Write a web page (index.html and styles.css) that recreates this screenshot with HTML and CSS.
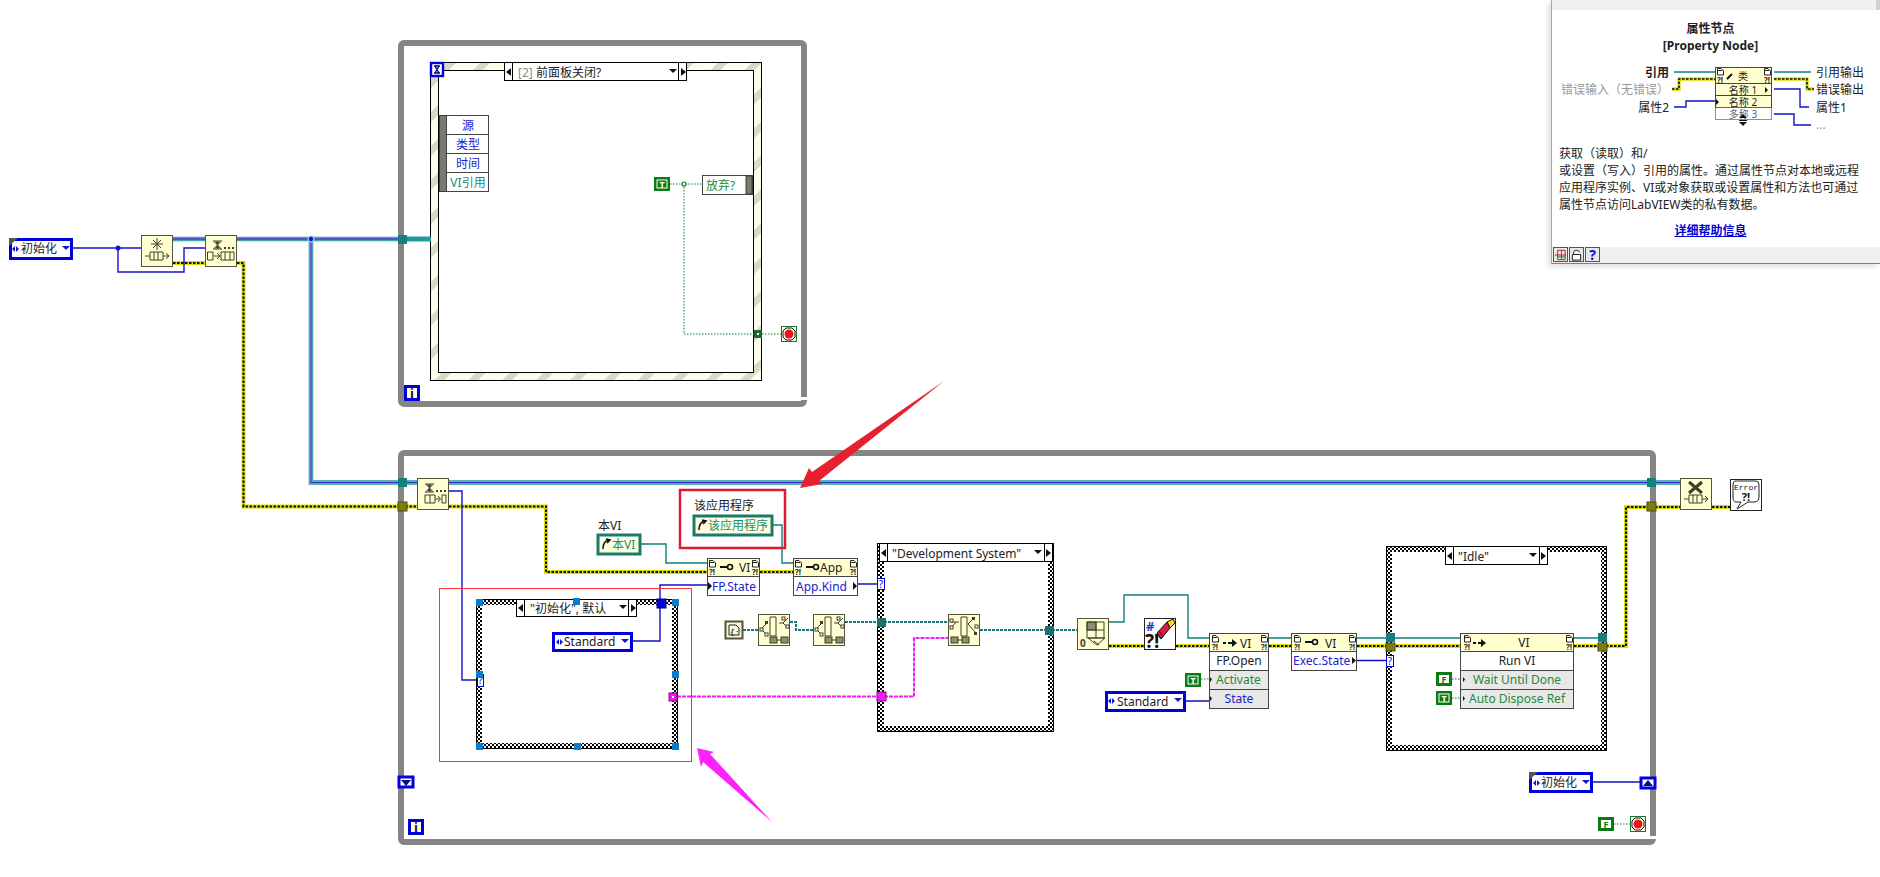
FILE: index.html
```html
<!DOCTYPE html>
<html lang="zh">
<head>
<meta charset="utf-8">
<title>LabVIEW block diagram</title>
<link rel="stylesheet" href="styles.css">
</head>
<body>
<main class="desk">
<svg class="canvas" width="1880" height="877" viewBox="0 0 1880 877" xmlns="http://www.w3.org/2000/svg">
<defs>
  <pattern id="checker" width="4" height="4" patternUnits="userSpaceOnUse">
    <rect width="4" height="4" fill="#fff"/>
    <rect width="2" height="2" fill="#000"/>
    <rect x="2" y="2" width="2" height="2" fill="#000"/>
  </pattern>
  <pattern id="stripes" width="24" height="24" patternUnits="userSpaceOnUse" patternTransform="rotate(-45)">
    <rect width="24" height="24" fill="#fdfdec"/>
    <rect width="24" height="7" fill="#d9d9c4"/>
  </pattern>

  <g id="clusterPaths">
    <path d="M173 239H205M237 239H430M311 239V482.5H417M449 482.5H1680"/>
  </g>
  <g id="errorPaths">
    <path d="M173 263H205M237 263H243.5V506.5H417M449 506.5H546V572H707M760 572H793M1109 646H1144M1176 646H1209M1269 646H1291M1357 646H1460M1574 646H1626V507H1680M1712 507H1730"/>
  </g>

  <g id="hourglass">
    <path class="ic" d="M6 6H15M6 14H15M7 6.5L14 13.500M14 6.5L7 13.500"/>
    <path class="ic-fill" d="M8 6.500H13L10.500 10ZM10.500 10L8 13.500H13Z"/>
    <rect class="ic-fill" x="17" y="12" width="2" height="2"/>
    <rect class="ic-fill" x="21" y="12" width="2" height="2"/>
    <rect class="ic-fill" x="25" y="12" width="2" height="2"/>
  </g>
  <g id="nObtain">
    <rect class="nf" x="0.5" y="0.5" width="31" height="31"/>
    <path class="ic" d="M16 3V15M10 9H22M12 5L20 13M20 5L12 13M4 21H9M9 17H22V25H9ZM13 17V25M17 17V25M22 21H28M25 18L28 21L25 24"/>
  </g>
  <g id="nDequeueA">
    <rect class="nf" x="0.5" y="0.5" width="31" height="31"/>
    <use href="#hourglass" x="2"/>
    <path class="ic" d="M2.5 17H8V25H2.5ZM9 21H15M12 18L15 21L12 24M16 17H29V25H16ZM20 17V25M25 17V25"/>
  </g>
  <g id="nDequeueB">
    <rect class="nf" x="0.5" y="0.5" width="31" height="31"/>
    <use href="#hourglass" x="2"/>
    <path class="ic" d="M8 17H18V25H8ZM13 17V25M18 21H23M21 18L23.500 21L21 24M25 17H29V25H25Z"/>
  </g>
  <g id="nRelease">
    <rect class="nf" x="0.5" y="0.5" width="31" height="31"/>
    <path class="ic-bold" d="M9 4L22 15M22 4L9 15"/>
    <path class="ic" d="M4 21H9M9 17H22V25H9ZM13 17V25M17 17V25M22 21H28M25 18L28 21L25 24"/>
  </g>
  <g id="nSplitA">
    <rect class="nf" x="0.5" y="0.5" width="31" height="31"/>
    <path class="ic" d="M12 3H18V22H12ZM3 15L9 9M3 15L9 21M21 9H25M25 9L30 14M25 9L30 4"/>
    <rect class="ic-fill" x="7" y="7" width="3" height="3"/>
    <rect class="ic-hollow" x="2" y="14" width="3" height="3"/>
    <rect class="ic-hollow" x="7" y="19" width="3" height="3"/>
    <rect class="ic-hollow" x="24" y="3" width="3" height="3"/>
    <rect class="ic-hollow" x="28" y="11" width="3" height="3"/>
    <rect class="ic-chk" x="12" y="23" width="7" height="6"/>
    <path class="ic" d="M19 26H23"/>
    <rect class="ic-chk" x="23" y="23" width="7" height="6"/>
  </g>
  <g id="nSplitB">
    <rect class="nf" x="0.5" y="0.5" width="31" height="31"/>
    <path class="ic" d="M13 3H19V22H13ZM3 8H11M3 14L8 8M20 10L25 5M20 10L28 19"/>
    <rect class="ic-hollow" x="2" y="5" width="3" height="3"/>
    <rect class="ic-hollow" x="2" y="12" width="3" height="3"/>
    <rect class="ic-fill" x="24" y="3" width="3" height="3"/>
    <rect class="ic-hollow" x="27" y="11" width="3" height="3"/>
    <rect class="ic-fill" x="26" y="18" width="3" height="3"/>
    <rect class="ic-chk" x="3" y="23" width="7" height="6"/>
    <path class="ic" d="M10 26H14"/>
    <rect class="ic-chk" x="14" y="23" width="7" height="6"/>
  </g>
  <g id="nArray">
    <rect class="nf" x="0.5" y="0.5" width="31" height="31"/>
    <rect class="ic-chk" x="10" y="4" width="9" height="8"/>
    <path class="ic" d="M10 4H27V20H10ZM19 4V20M10 12H27M11 20L28 20L20 27ZM17 23L22 27"/>
    <text class="ic-num" x="3" y="29">0</text>
  </g>
  <g id="nClear">
    <rect class="box-w" x="0.5" y="0.5" width="31" height="31"/>
    <text class="clr-hash" x="2" y="13">#</text>
    <text class="clr-q" x="1" y="30">?!</text>
    <path class="clr-yel" d="M23 4L29 1L31 5L26 10Z"/>
    <path class="clr-red" d="M13 15L23 4L26 10L17 21Z"/>
    <path class="ic-thin" d="M13 15L17 21L19 19L15 13Z"/>
  </g>
  <g id="nError">
    <rect class="box-w" x="0.5" y="0.5" width="31" height="31"/>
    <path class="ic-thin" d="M5 2H26Q29 2 29 6V18Q29 23 24 23H18L7 30L11 23H6Q3 23 3 18V6Q3 2 5 2Z"/>
    <text class="err-t" x="16" y="11">Error</text>
    <text class="err-q" x="16" y="22">?!</text>
  </g>
  <g id="corner">
    <path class="doc" d="M0.5 0.5H4L6.500 3V7H0.5Z"/>
    <path class="ic-bar" d="M1 2.500H5"/>
    <text class="qmark" x="0" y="15">?!</text>
  </g>
  <g id="keyIcon">
    <path class="ic-key" d="M0 4H8"/>
    <circle class="ic-ring" cx="10" cy="4" r="2.500"/>
  </g>
  <g id="enumL">
    <path class="tri" d="M0 3L3 0V6Z"/>
    <path class="tri" d="M4 0L7 3L4 6Z"/>
  </g>
  <g id="stopBtn">
    <rect class="stop-b" x="0.5" y="0.5" width="15" height="15"/>
    <path class="stop-o" d="M5 2H11L14 5V11L11 14H5L2 11V5Z"/>
    <circle class="stop-r" cx="8" cy="8" r="4.500"/>
  </g>
  <g id="constT">
    <rect class="c-fill" width="16" height="14"/>
    <rect class="c-in" x="3" y="3" width="10" height="8"/>
    <text class="c-t" x="8" y="10.500">T</text>
  </g>
  <g id="constF">
    <rect class="c-fill" width="16" height="14"/>
    <rect class="c-wh" x="3" y="3" width="10" height="8"/>
    <text class="c-f" x="8" y="10.500">F</text>
  </g>
  <g id="iconI">
    <rect class="i-b" x="1.500" y="1.500" width="13" height="13"/>
    <text class="i-t" x="8" y="13">i</text>
  </g>
  <g id="sarrow">
    <path class="tri-k" d="M0 4L5 0V8Z"/>
  </g>
</defs>

<!-- wires under the structures -->
<g fill="none">
  <use href="#clusterPaths" class="cl1"/>
  <use href="#clusterPaths" class="cl2"/>
  <use href="#clusterPaths" class="cl3"/>
  <use href="#errorPaths" class="er1"/>
  <use href="#errorPaths" class="er2"/>
  <path class="w-blue" d="M72 248H141M118 248V272H184V248H205M449 491H462V680H477M707 585H660V603M858 584H877M1185 701H1209M1357 660.500H1386M1592 782H1640"/>
  <path class="w-ref" d="M641 544H666V563H707M773 525H782V563H793M1109 622H1124V595H1188V638H1209M1269 638H1291M1357 638H1460M1574 638H1598"/>
  <path class="w-scr" d="M743 630H758M790 622H796V630H813M845 622H948M980 630H1077"/>
  <path class="w-mag" d="M677 696.500H914V638H948"/>
</g>
<circle class="j-blue" cx="118" cy="248" r="2.500"/>
<circle class="j-cl" cx="311" cy="239" r="3.500"/>
<circle class="j-blue" cx="311" cy="239" r="2.200"/>

<!-- while loops -->
<rect class="loop" x="401" y="43" width="403" height="361" rx="3"/>
<rect class="notch" x="801" y="397" width="7" height="3"/>
<rect class="loop" x="401" y="453" width="1252" height="389" rx="3"/>
<rect class="notch" x="1650" y="836" width="7" height="3"/>
<rect class="tun-t" x="398" y="235" width="9" height="9"/>
<rect class="tun-t" x="398" y="478" width="9" height="9"/>
<rect class="tun-e" x="398" y="502" width="9" height="9"/>
<rect class="tun-t" x="1647" y="478" width="9" height="9"/>
<rect class="tun-e" x="1647" y="502" width="9" height="9"/>

<use href="#iconI" x="404" y="385"/>
<use href="#iconI" x="408" y="819"/>

<!-- event structure -->
<rect x="430.500" y="62.500" width="331" height="318" fill="url(#stripes)" class="frame-line"/>
<rect class="inner-line" x="438.500" y="70.500" width="315" height="302"/>
<path class="wire-in" d="M407 239H431" />
<rect class="blue-sq" x="431" y="63" width="12" height="13"/>
<path class="glass" d="M434 66H440M434 73H440M435 66L439 73M439 66L435 73"/>
<rect class="sel" x="504.500" y="62.500" width="182" height="18"/>
<path class="sel-div" d="M512.500 63V80M678.500 63V80"/>
<use href="#sarrow" x="506" y="68"/>
<path class="tri-k" d="M681 68L686 72L681 76Z"/>
<path class="tri-k" d="M669 69H677L673 73Z"/>
<text class="txt gray" x="518" y="77">[2]</text>
<text class="txt" x="536" y="77">前面板关闭?</text>

<rect class="ev-bar" x="439.500" y="115.500" width="7" height="76"/>
<rect class="cell" x="446.500" y="115.500" width="42" height="19"/>
<rect class="cell" x="446.500" y="134.500" width="42" height="19"/>
<rect class="cell" x="446.500" y="153.500" width="42" height="19"/>
<rect class="cell" x="446.500" y="172.500" width="42" height="19"/>
<text class="txt blue mid" x="468" y="130">源</text>
<text class="txt blue mid" x="468" y="149">类型</text>
<text class="txt blue mid" x="468" y="168">时间</text>
<text class="txt teal mid" x="468" y="187">VI引用</text>

<path class="w-dot" d="M670 184H702M684 184V334H754M762 334H782"/>
<use href="#constT" x="654" y="177"/>
<circle class="j-green" cx="684" cy="184" r="2"/>
<rect class="cell" x="702.500" y="175.500" width="50" height="19"/>
<rect class="ev-bar" x="746" y="176" width="6" height="18"/>
<text class="txt green" x="706" y="190">放弃?</text>
<rect class="tun-g" x="754" y="330" width="8" height="8"/>
<rect class="tun-g-dot" x="757" y="333" width="2" height="2"/>
<use href="#stopBtn" x="781" y="326"/>

<!-- outside nodes -->
<rect class="enum" x="10.500" y="239.500" width="61" height="19"/>
<path class="corner-dk" d="M9 238H18L9 246Z"/>
<use href="#enumL" x="12" y="246"/>
<text class="txt" x="21" y="253">初始化</text>
<path class="tri" d="M62 246H70L66 250Z"/>
<use href="#nObtain" x="141" y="235"/>
<use href="#nDequeueA" x="205" y="235"/>
<use href="#nDequeueB" x="417" y="478"/>
<use href="#nRelease" x="1680" y="478"/>
<use href="#nError" x="1730" y="479"/>

<!-- 本VI / 该应用程序 -->
<text class="txt" x="598" y="530">本VI</text>
<rect class="ref" x="598" y="535" width="42" height="19"/>
<path class="ic-arrow" d="M603 549Q603 541 609 540M606 539L610 540L607 543"/>
<text class="txt teal" x="612" y="549">本VI</text>
<rect class="redbox" x="680" y="490" width="105" height="58"/>
<text class="txt" x="694" y="510">该应用程序</text>
<rect class="ref" x="694" y="516" width="78" height="19"/>
<path class="ic-arrow" d="M699 530Q699 522 705 521M702 520L706 521L703 524"/>
<text class="txt teal" x="708" y="530">该应用程序</text>

<!-- property nodes -->
<g>
  <rect class="hdr" x="707.500" y="558.500" width="52" height="18"/>
  <rect class="cell" x="707.500" y="576.500" width="52" height="19"/>
  <use href="#corner" x="709" y="560"/>
  <use href="#corner" x="752" y="560"/>
  <use href="#keyIcon" x="720" y="563"/>
  <text class="txt" x="739" y="572">VI</text>
  <path class="tri-k" d="M708 582L712 586L708 590Z"/>
  <text class="txt blue" x="712" y="591">FP.State</text>
</g>
<g>
  <rect class="hdr" x="793.500" y="558.500" width="64" height="18"/>
  <rect class="cell" x="793.500" y="576.500" width="64" height="19"/>
  <use href="#corner" x="795" y="560"/>
  <use href="#corner" x="850" y="560"/>
  <use href="#keyIcon" x="806" y="563"/>
  <text class="txt" x="820" y="572">App</text>
  <text class="txt blue" x="796" y="591">App.Kind</text>
  <path class="tri-k" d="M853 582L857 586L853 590Z"/>
</g>

<!-- selected case structure -->
<rect x="476.500" y="599.500" width="201" height="149" fill="url(#checker)" class="frame-line"/>
<rect class="inner" x="482" y="605" width="190" height="138"/>
<rect class="sel" x="516.500" y="599.500" width="120" height="17"/>
<path class="sel-div" d="M524.500 600V617M628.500 600V617"/>
<use href="#sarrow" x="518" y="604"/>
<path class="tri-k" d="M631 604L636 608L631 612Z"/>
<path class="tri-k" d="M619 605H627L623 609Z"/>
<text class="txt" x="530" y="613">"初始化", 默认</text>
<path class="w-blue no-fill" d="M632 641H660V605"/>
<rect class="enum" x="553.500" y="633.500" width="78" height="17"/>
<use href="#enumL" x="556" y="639"/>
<text class="txt" x="564" y="646">Standard</text>
<path class="tri" d="M621 639H629L625 643Z"/>
<rect class="tun-b" x="657" y="599" width="9" height="9"/>
<rect class="sel-q" x="477.500" y="674.500" width="6" height="12"/>
<text class="q-blue" x="480.500" y="684">?</text>
<rect class="tun-m" x="669" y="693" width="8" height="8"/>
<rect class="tun-m-dot" x="672" y="696" width="2" height="2"/>
<rect class="handle" x="476" y="599" width="7" height="7"/>
<rect class="handle" x="573" y="598" width="7" height="7"/>
<rect class="handle" x="672" y="599" width="7" height="7"/>
<rect class="handle" x="476" y="671" width="7" height="7"/>
<rect class="handle" x="672" y="671" width="7" height="7"/>
<rect class="handle" x="476" y="743" width="7" height="7"/>
<rect class="handle" x="574" y="743" width="7" height="7"/>
<rect class="handle" x="672" y="743" width="7" height="7"/>
<rect class="redthin" x="439.500" y="588.500" width="252" height="173"/>

<!-- Development System case -->
<rect class="doc-const" x="725.500" y="621.500" width="17" height="17"/>
<path class="ic-thin" d="M729 625H736L739 628V635H729Z"/>
<text class="tiny" x="730" y="634">{·</text>
<use href="#nSplitA" x="758" y="614"/>
<use href="#nSplitA" x="813" y="614"/>
<rect x="877.500" y="543.500" width="176" height="188" fill="url(#checker)" class="frame-line"/>
<rect class="inner" x="884" y="549" width="164" height="177"/>
<path class="w-scr no-fill" d="M884 622H948M980 630H1048"/>
<path class="w-mag no-fill" d="M884 696.500H914V638H948"/>
<rect class="sel" x="879.500" y="543.500" width="173" height="18"/>
<path class="sel-div" d="M887.500 544V561M1044.500 544V561"/>
<use href="#sarrow" x="881" y="549"/>
<path class="tri-k" d="M1046 549L1051 553L1046 557Z"/>
<path class="tri-k" d="M1034 550H1042L1038 554Z"/>
<text class="txt" x="892" y="558">"Development System"</text>
<rect class="sel-q" x="877.500" y="578.500" width="7" height="11"/>
<text class="q-blue" x="881" y="588">?</text>
<rect class="tun-t2" x="877" y="618" width="9" height="9"/>
<rect class="tun-m" x="877" y="692" width="9" height="9"/>
<rect class="tun-t2" x="1045" y="626" width="9" height="9"/>
<use href="#nSplitB" x="948" y="614"/>
<use href="#nArray" x="1077" y="618"/>
<use href="#nClear" x="1144" y="618"/>

<!-- FP.Open invoke -->
<rect class="hdr" x="1209.500" y="633.500" width="59" height="18"/>
<rect class="cell" x="1209.500" y="651.500" width="59" height="19"/>
<rect class="cell-g" x="1209.500" y="670.500" width="59" height="19"/>
<rect class="cell-g" x="1209.500" y="689.500" width="59" height="19"/>
<use href="#corner" x="1212" y="635"/>
<use href="#corner" x="1261" y="635"/>
<path class="ic-inv" d="M1223 643H1226M1228 643H1235"/>
<path class="tri-k" d="M1232 639L1237 643L1232 647Z"/>
<text class="txt" x="1240" y="648">VI</text>
<text class="txt mid" x="1239" y="665">FP.Open</text>
<path class="w-dot" d="M1201 679H1209"/>
<path class="tri-k" d="M1210 677L1212 679.500L1210 682Z"/>
<text class="txt green" x="1216" y="684">Activate</text>
<path class="tri-k" d="M1210 696L1212 698.500L1210 701Z"/>
<text class="txt blue mid" x="1239" y="703">State</text>
<use href="#constT" x="1185" y="673"/>
<rect class="enum" x="1106.500" y="692.500" width="78" height="18"/>
<use href="#enumL" x="1108" y="698"/>
<text class="txt" x="1117" y="706">Standard</text>
<path class="tri" d="M1174 698H1182L1178 702Z"/>

<!-- Exec.State -->
<rect class="hdr" x="1291.500" y="633.500" width="65" height="18"/>
<rect class="cell" x="1291.500" y="651.500" width="65" height="19"/>
<use href="#corner" x="1294" y="635"/>
<use href="#corner" x="1349" y="635"/>
<use href="#keyIcon" x="1305" y="638"/>
<text class="txt" x="1325" y="648">VI</text>
<text class="txt blue" x="1293" y="665">Exec.State</text>
<path class="tri-k" d="M1352 657L1356 660.500L1352 664Z"/>

<!-- Idle case -->
<rect x="1386.500" y="546.500" width="220" height="204" fill="url(#checker)" class="frame-line"/>
<rect class="inner" x="1392" y="552" width="209" height="193"/>
<path class="w-ref" d="M1392 638H1460M1574 638H1600"/>
<path class="er1 no-fill" d="M1392 646H1460M1574 646H1600"/>
<path class="er2 no-fill" d="M1392 646H1460M1574 646H1600"/>
<rect class="sel" x="1445.500" y="546.500" width="102" height="18"/>
<path class="sel-div" d="M1453.500 547V564M1539.500 547V564"/>
<use href="#sarrow" x="1447" y="552"/>
<path class="tri-k" d="M1541 552L1546 556L1541 560Z"/>
<path class="tri-k" d="M1529 553H1537L1533 557Z"/>
<text class="txt" x="1458" y="561">"Idle"</text>
<rect class="sel-q" x="1386.500" y="655.500" width="7" height="11"/>
<text class="q-blue" x="1390" y="665">?</text>
<rect class="tun-t" x="1386" y="633" width="9" height="9"/>
<rect class="tun-e" x="1386" y="643" width="9" height="8"/>
<rect class="tun-t" x="1598" y="633" width="9" height="9"/>
<rect class="tun-e" x="1598" y="643" width="9" height="8"/>

<rect class="hdr" x="1460.500" y="633.500" width="113" height="18"/>
<rect class="cell" x="1460.500" y="651.500" width="113" height="19"/>
<rect class="cell-g" x="1460.500" y="670.500" width="113" height="19"/>
<rect class="cell-g" x="1460.500" y="689.500" width="113" height="19"/>
<use href="#corner" x="1464" y="635"/>
<use href="#corner" x="1566" y="635"/>
<path class="ic-inv" d="M1473 643H1476M1478 643H1484"/>
<path class="tri-k" d="M1481 639L1486 643L1481 647Z"/>
<text class="txt mid" x="1524" y="647">VI</text>
<text class="txt mid" x="1517" y="665">Run VI</text>
<path class="w-dot" d="M1452 679H1460M1452 698H1460"/>
<path class="tri-k" d="M1463 677L1465 679.500L1463 682Z"/>
<text class="txt green mid" x="1517" y="684">Wait Until Done</text>
<path class="tri-k" d="M1463 696L1465 698.500L1463 701Z"/>
<text class="txt green mid" x="1517" y="703">Auto Dispose Ref</text>
<use href="#constF" x="1436" y="672"/>
<use href="#constT" x="1436" y="691"/>

<!-- bottom right of main loop -->
<rect class="enum" x="1530.500" y="773.500" width="61" height="18"/>
<path class="corner-dk" d="M1529 772H1538L1529 780Z"/>
<use href="#enumL" x="1533" y="780"/>
<text class="txt" x="1541" y="787">初始化</text>
<path class="tri" d="M1582 780H1590L1586 784Z"/>
<rect class="sr" x="1641" y="778" width="14" height="10"/>
<path class="tri-b" d="M1643 786H1653L1648 780Z"/>
<rect class="sr" x="399" y="777" width="14" height="10"/>
<path class="tri-b" d="M401 780H411L406 786Z"/>
<path class="w-dot" d="M1614 824H1630"/>
<use href="#constF" x="1598" y="817"/>
<use href="#stopBtn" x="1630" y="816"/>

<!-- annotation arrows -->
<path class="arrow-r" d="M944 381L819 481L822 484L800 488L809 468L812 472Z"/>
<path class="arrow-m" d="M772 822L710 754L714 752L697 748L701 767L703 762Z"/>
</svg>

<aside class="help">
  <div class="help-top"><span class="help-scroll"></span></div>
  <div class="help-body">
    <div class="help-title">属性节点<br>[Property Node]</div>
    <svg class="help-fig" width="328" height="91" viewBox="0 0 328 91" xmlns="http://www.w3.org/2000/svg">
      <g fill="none">
        <path class="w-ref" d="M122 18H163M222 18H259"/>
        <path class="er1 thin" d="M120 35H127V25H163M222 25H255V35H262"/>
        <path class="er2 thin" d="M120 35H127V25H163M222 25H255V35H262"/>
        <path class="w-blue" d="M122 53H134V47H163M222 35H248V53H257M222 60H242V71H259"/>
      </g>
      <text class="txt bold end" x="117" y="23">引用</text>
      <text class="txt lgray" x="9" y="40">错误输入（无错误）</text>
      <text class="txt end" x="117" y="58">属性2</text>
      <text class="txt" x="264" y="23">引用输出</text>
      <text class="txt" x="264" y="40">错误输出</text>
      <text class="txt" x="264" y="58">属性1</text>
      <text class="txt lgray" x="264" y="75">...</text>
      <rect class="hdr" x="163.500" y="13.500" width="56" height="16"/>
      <rect class="hdr" x="163.500" y="29.500" width="56" height="12"/>
      <rect class="hdr" x="163.500" y="41.500" width="56" height="12"/>
      <rect class="dotted" x="163.500" y="53.500" width="56" height="12"/>
      <use href="#corner" x="165" y="14"/>
      <use href="#corner" x="212" y="14"/>
      <path class="ic-key" d="M175 25L180 20"/>
      <text class="txt-s" x="186" y="26">类</text>
      <text class="txt-s mid" x="191" y="39.500">名称 1</text>
      <path class="tri-k" d="M213 33L216 36L213 39Z"/>
      <text class="txt-s mid" x="191" y="51.500">名称 2</text>
      <path class="tri-k" d="M164 45L167 48L164 51Z"/>
      <text class="txt-s mid lgray2" x="191" y="63.500">多称 3</text>
      <path class="tri-k" d="M187 64H195L191 60ZM187 66H195V67H187ZM187 68H195L191 72Z"/>
    </svg>
    <p class="help-text">获取（读取）和/<br>或设置（写入）引用的属性。通过属性节点对本地或远程<br>应用程序实例、VI或对象获取或设置属性和方法也可通过<br>属性节点访问LabVIEW类的私有数据。</p>
    <a class="help-link" href="#">详细帮助信息</a>
  </div>
  <div class="help-bar">
    <span class="tool">
      <svg width="14" height="14" viewBox="0 0 14 14" xmlns="http://www.w3.org/2000/svg"><path class="t-red" d="M1 7H13M4 2H12V12H4Z"/><path class="t-green" d="M8 2V12M4 9H12"/></svg>
    </span>
    <span class="tool">
      <svg width="14" height="14" viewBox="0 0 14 14" xmlns="http://www.w3.org/2000/svg"><path class="t-blk" d="M4 6V4Q4 2 7 2Q10 2 10 4M2.500 6.500H11.500V12.500H2.500Z"/></svg>
    </span>
    <span class="tool tool-q">?</span>
  </div>
</aside>
</main>
</body>
</html>
```

FILE: styles.css
```css
html, body { margin: 0; padding: 0; background: #fff; }
body { width: 1880px; height: 877px; overflow: hidden; }
.desk { position: relative; width: 1880px; height: 877px; }
.canvas { display: block; }

.txt { font: 12px "Noto Sans", "Noto Sans CJK SC", sans-serif; fill: #222; }
.txt-s { font: 10px "Noto Sans", "Noto Sans CJK SC", sans-serif; fill: #222; }
.gray { fill: #8a8a8a; }
.blue { fill: #2222cc; }
.teal { fill: #1c8a78; }
.green { fill: #1e8a3c; }
.bold { font-weight: 700; }
.mid { text-anchor: middle; }
.end { text-anchor: end; }
.lgray { fill: #999; }
.lgray2 { fill: #666; }

/* wires */
.no-fill { fill: none; }
.cl1 { stroke: #1f9a9e; stroke-width: 4.6; }
.cl2 { stroke: #a6d2dc; stroke-width: 2.6; }
.cl3 { stroke: #3c28c0; stroke-width: 1.3; }
.er1 { stroke: #dcdc00; stroke-width: 4; }
.er2 { stroke: #111; stroke-width: 2; stroke-dasharray: 2.500 1.500; }
.er1.thin { stroke-width: 3.4; }
.er2.thin { stroke-width: 1.6; }
.w-blue { stroke: #1212c8; stroke-width: 1.4; }
.w-ref { stroke: #108078; stroke-width: 1.4; fill: none; }
.w-dot { stroke: #127a2a; stroke-width: 1; stroke-dasharray: 1.500 1.500; fill: none; }
.w-scr { stroke: #1a7a7a; stroke-width: 2; stroke-dasharray: 3 1; }
.w-mag { stroke: #f41cf4; stroke-width: 2; stroke-dasharray: 4 1; }
.wire-in { stroke: #1f9a9e; stroke-width: 4.6; }
.j-blue { fill: #1212d8; }
.j-cl { fill: #8fd0e0; }
.j-green { fill: #fff; stroke: #127a2a; stroke-width: 1.2; }

/* loops and tunnels */
.loop { fill: none; stroke: #858585; stroke-width: 6; }
.notch { fill: #fff; }
.tun-t { fill: #128080; }
.tun-t2 { fill: #1c6f6c; }
.tun-e { fill: #7c7c10; stroke: #4e4e10; }
.tun-b { fill: #0000e0; stroke: #000070; }
.tun-m { fill: #f41cf4; stroke: #801080; }
.tun-m-dot { fill: #fff; }
.tun-g { fill: #186a28; }
.tun-g-dot { fill: #fff; }
.i-b { fill: #ffffe0; stroke: #0000d8; stroke-width: 3; }
.i-t { font: 700 13px "Noto Sans", sans-serif; fill: #101060; text-anchor: middle; }

/* structures */
.frame-line { stroke: #000; stroke-width: 1; }
.inner-line { fill: #fff; stroke: #000; stroke-width: 1; }
.inner { fill: #fff; }
.sel { fill: #fff; stroke: #000; stroke-width: 1; }
.sel-div { stroke: #000; stroke-width: 1; fill: none; }
.sel-q { fill: #fff; stroke: #0000d8; stroke-width: 1; }
.q-blue { font: 10px "Noto Sans", sans-serif; fill: #0000d8; text-anchor: middle; }
.tri-k { fill: #111; }
.tri { fill: #1414d4; }
.tri-b { fill: #0b0b80; }
.blue-sq { fill: #fff; stroke: #0000e0; stroke-width: 2.4; }
.glass { stroke: #000080; stroke-width: 1.3; fill: none; }
.ev-bar { fill: #7a7a70; stroke: #3c3c3c; stroke-width: 1; }
.cell { fill: #fff; stroke: #444; stroke-width: 1; }
.cell-g { fill: #e8e8e8; stroke: #444; stroke-width: 1; }
.hdr { fill: #ffffcf; stroke: #444; stroke-width: 1; }
.dotted { fill: #fff; stroke: #222; stroke-width: 1; stroke-dasharray: 1 1; }
.enum { fill: #fff; stroke: #0000d8; stroke-width: 3; }
.corner-dk { fill: #555; }
.ref { fill: #ffffe0; stroke: #1a7a6c; stroke-width: 3; }
.ic-arrow { fill: none; stroke: #111; stroke-width: 1.6; }
.sr { fill: #fff; stroke: #0000e0; stroke-width: 3; }
.redbox { fill: none; stroke: #dd1a2e; stroke-width: 2.5; }
.redthin { fill: none; stroke: #ff3038; stroke-width: 1; }
.handle { fill: #0a7ccf; }
.doc-const { fill: #f8f8dc; stroke: #555539; stroke-width: 2; }
.tiny { font: 700 8px "Liberation Mono", monospace; fill: #333; }

/* node icons */
.nf { fill: #ffffd2; stroke: #55553a; stroke-width: 1; }
.box-w { fill: #fff; stroke: #222; stroke-width: 1; }
.ic { fill: none; stroke: #40402a; stroke-width: 1; }
.ic-thin { fill: none; stroke: #222; stroke-width: 1; }
.ic-bold { fill: none; stroke: #40402a; stroke-width: 3; }
.ic-fill { fill: #40402a; }
.ic-hollow { fill: #fff; stroke: #40402a; stroke-width: 1; }
.ic-chk { fill: #8e8e74; stroke: #40402a; stroke-width: 1; }
.ic-num { font: 700 10px "Noto Sans", sans-serif; fill: #40402a; }
.ic-bar { stroke: #222; stroke-width: 1; fill: none; }
.ic-key { stroke: #111; stroke-width: 2; fill: none; }
.ic-ring { fill: #ffffd2; stroke: #111; stroke-width: 1.6; }
.ic-inv { stroke: #111; stroke-width: 2; fill: none; }
.doc { fill: #fff; stroke: #222; stroke-width: 1; }
.qmark { font: 700 8px "Noto Sans", sans-serif; fill: #222; }
.clr-hash { font: 700 13px "Noto Sans", sans-serif; fill: #1c3fc8; }
.clr-q { font: 700 19px "Noto Sans", sans-serif; fill: #111; }
.clr-yel { fill: #f6e010; stroke: #111; stroke-width: 1; }
.clr-red { fill: #d81c4c; stroke: #111; stroke-width: 1; }
.err-t { font: 8px "Liberation Mono", monospace; fill: #111; text-anchor: middle; }
.err-q { font: 700 11px "Noto Sans", sans-serif; fill: #111; text-anchor: middle; }
.stop-b { fill: #ffffe0; stroke: #127a2a; stroke-width: 1; }
.stop-o { fill: #fff; stroke: #111; stroke-width: 1; }
.stop-r { fill: #ee1414; }
.c-fill { fill: #0a7a12; }
.c-in { fill: #0a7a12; stroke: #fff; stroke-width: 1; }
.c-wh { fill: #fff; }
.c-t { font: 700 9px "Noto Sans", sans-serif; fill: #fff; text-anchor: middle; }
.c-f { font: 700 9px "Noto Sans", sans-serif; fill: #0a7a12; text-anchor: middle; }

/* annotation arrows */
.arrow-r { fill: #e8202e; }
.arrow-m { fill: #fb22fb; }

/* context help window */
.help {
  position: absolute;
  left: 1551px;
  top: 0;
  width: 329px;
  height: 264px;
  box-sizing: border-box;
  display: flex;
  flex-direction: column;
  background: #fff;
  border-left: 1px solid #a8a8a8;
  border-bottom: 1px solid #808080;
  box-shadow: -3px 3px 5px rgba(0, 0, 0, .12);
}
.help-top { position: relative; height: 10px; flex: none; background: #f0f0f0; }
.help-scroll { position: absolute; right: 0; top: 0; width: 4px; height: 10px; background: #d0d0d0; }
.help-body { flex: 1; display: flex; flex-direction: column; font: 12px/17px "Noto Sans", "Noto Sans CJK SC", sans-serif; color: #222; }
.help-title { padding: 10px 11px 0 0; text-align: center; font-weight: 700; }
.help-fig { display: block; flex: none; }
.help-text { margin: 0; padding-left: 7px; white-space: nowrap; }
.help-link { margin-top: 9px; padding-right: 11px; text-align: center; font-weight: 700; color: #0000d8; }
.help-bar { flex: none; height: 16px; display: flex; gap: 1px; padding-left: 1px; background: #f0f0f0; }
.tool {
  width: 15px;
  height: 15px;
  box-sizing: border-box;
  display: flex;
  align-items: center;
  justify-content: center;
  border: 1px solid #555;
  background: #e8e8e8;
}
.tool-q { font: 700 14px/14px "Noto Sans", sans-serif; color: #1010d0; }
.t-red { fill: none; stroke: #b01818; stroke-width: 1; }
.t-green { fill: none; stroke: #127a2a; stroke-width: 1; }
.t-blk { fill: #fff; stroke: #111; stroke-width: 1; }
```
